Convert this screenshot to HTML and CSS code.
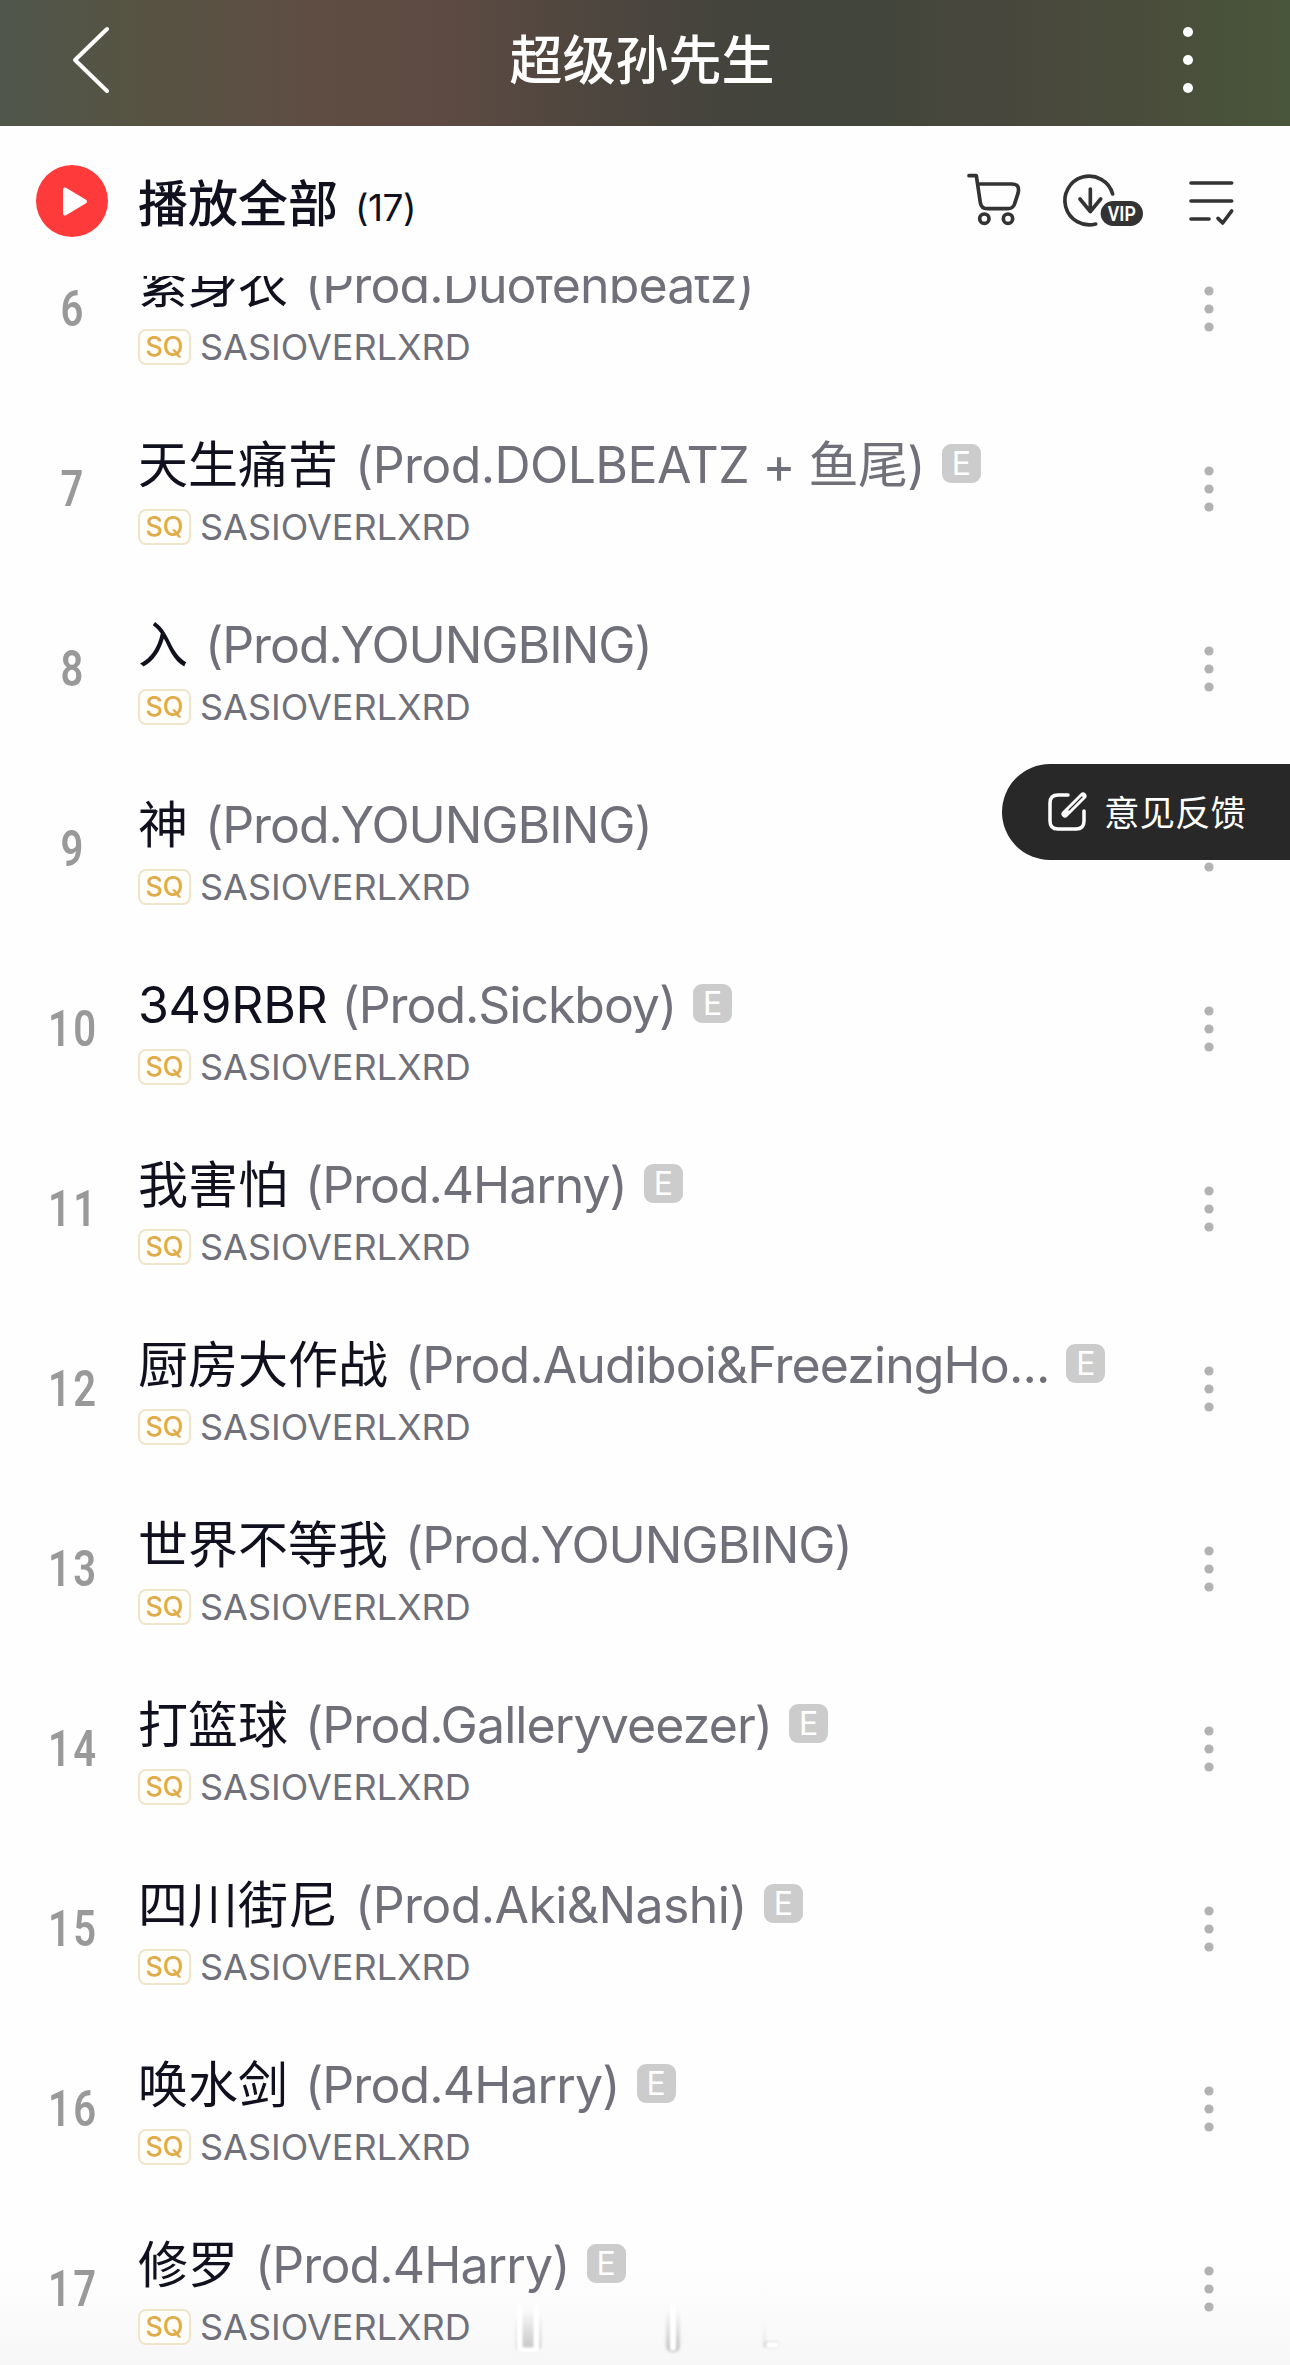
FILE: index.html
```html
<!DOCTYPE html>
<html lang="zh-CN">
<head>
<meta charset="utf-8">
<title>超级孙先生</title>
<link rel="stylesheet" href="styles.css">
</head>
<body>
<svg class="sprite" width="0" height="0">
  <symbol id="dots" viewBox="0 0 10 46"><circle cx="5" cy="5" r="4.6"/><circle cx="5" cy="23" r="4.6"/><circle cx="5" cy="41" r="4.6"/></symbol>
</svg>
<header class="header">
  <svg class="back" width="44" height="74" viewBox="0 0 44 74"><path d="M38 6 6 37 38 68"/></svg>
  <h1 class="album">超级孙先生</h1>
  <svg class="menu" width="12" height="68" viewBox="0 0 12 68"><circle cx="6" cy="6" r="5"/><circle cx="6" cy="34" r="5"/><circle cx="6" cy="62" r="5"/></svg>
</header>
<section class="toolbar">
  <svg class="play" width="72" height="72" viewBox="0 0 72 72"><circle cx="36" cy="36" r="36"/><path d="M29 24.500 49 36.500 29 48.500Z"/></svg>
  <span class="play-all">播放全部</span><span class="count">(17)</span>
  <svg class="tools" width="320" height="100" viewBox="0 0 960 300">
    <path d="M87 77H109L121 158Q124 176 142 176H204Q218 176 223 164L234 130Q241 102 216 102H114"/>
    <circle cx="133" cy="206" r="14"/><circle cx="204" cy="206" r="14"/>
    <path d="M518 132A73 73 0 1 0 467 222M451 117V184M420 147 451 185 482 147"/>
    <rect class="vip-bg" x="482" y="153" width="127" height="75" rx="37.500"/>
    <text class="vip" x="545.500" y="212" text-anchor="middle" textLength="84" lengthAdjust="spacingAndGlyphs">VIP</text>
    <path d="M753 99H875M753 153H875M753 207H807M834 205 848 219 875 183"/>
  </svg>
</section>
<main class="list">
  <article class="row"><span class="num">6</span><div class="info"><div class="title"><b>紧身衣</b><span class="prod">(Prod.Duofenbeatz)</span></div><div class="sub"><i class="sq">SQ</i><span class="artist">SASIOVERLXRD</span></div></div><svg class="more"><use href="#dots"/></svg></article>
  <article class="row"><span class="num">7</span><div class="info"><div class="title"><b>天生痛苦</b><span class="prod loose">(Prod.DOLBEATZ + 鱼尾)</span><i class="e">E</i></div><div class="sub"><i class="sq">SQ</i><span class="artist">SASIOVERLXRD</span></div></div><svg class="more"><use href="#dots"/></svg></article>
  <article class="row"><span class="num">8</span><div class="info"><div class="title"><b>入</b><span class="prod tight">(Prod.YOUNGBING)</span></div><div class="sub"><i class="sq">SQ</i><span class="artist">SASIOVERLXRD</span></div></div><svg class="more"><use href="#dots"/></svg></article>
  <article class="row"><span class="num">9</span><div class="info"><div class="title"><b>神</b><span class="prod tight">(Prod.YOUNGBING)</span></div><div class="sub"><i class="sq">SQ</i><span class="artist">SASIOVERLXRD</span></div></div><svg class="more"><use href="#dots"/></svg></article>
  <article class="row"><span class="num">10</span><div class="info"><div class="title"><b class="latin">349RBR</b><span class="prod tight">(Prod.Sickboy)</span><i class="e">E</i></div><div class="sub"><i class="sq">SQ</i><span class="artist">SASIOVERLXRD</span></div></div><svg class="more"><use href="#dots"/></svg></article>
  <article class="row"><span class="num">11</span><div class="info"><div class="title"><b>我害怕</b><span class="prod tight">(Prod.4Harny)</span><i class="e">E</i></div><div class="sub"><i class="sq">SQ</i><span class="artist">SASIOVERLXRD</span></div></div><svg class="more"><use href="#dots"/></svg></article>
  <article class="row"><span class="num">12</span><div class="info"><div class="title"><b>厨房大作战</b><span class="prod">(Prod.Audiboi&amp;FreezingHo...</span><i class="e">E</i></div><div class="sub"><i class="sq">SQ</i><span class="artist">SASIOVERLXRD</span></div></div><svg class="more"><use href="#dots"/></svg></article>
  <article class="row"><span class="num">13</span><div class="info"><div class="title"><b>世界不等我</b><span class="prod tight">(Prod.YOUNGBING)</span></div><div class="sub"><i class="sq">SQ</i><span class="artist">SASIOVERLXRD</span></div></div><svg class="more"><use href="#dots"/></svg></article>
  <article class="row"><span class="num">14</span><div class="info"><div class="title"><b>打篮球</b><span class="prod">(Prod.Galleryveezer)</span><i class="e">E</i></div><div class="sub"><i class="sq">SQ</i><span class="artist">SASIOVERLXRD</span></div></div><svg class="more"><use href="#dots"/></svg></article>
  <article class="row"><span class="num">15</span><div class="info"><div class="title"><b>四川街尼</b><span class="prod loose">(Prod.Aki&amp;Nashi)</span><i class="e">E</i></div><div class="sub"><i class="sq">SQ</i><span class="artist">SASIOVERLXRD</span></div></div><svg class="more"><use href="#dots"/></svg></article>
  <article class="row"><span class="num">16</span><div class="info"><div class="title"><b>唤水剑</b><span class="prod">(Prod.4Harry)</span><i class="e">E</i></div><div class="sub"><i class="sq">SQ</i><span class="artist">SASIOVERLXRD</span></div></div><svg class="more"><use href="#dots"/></svg></article>
  <article class="row"><span class="num">17</span><div class="info"><div class="title"><b>修罗</b><span class="prod">(Prod.4Harry)</span><i class="e">E</i></div><div class="sub"><i class="sq">SQ</i><span class="artist">SASIOVERLXRD</span></div></div><svg class="more"><use href="#dots"/></svg></article>
</main>
<!-- Faint shapes showing through the bottom edge -->
<svg class="ghost" width="290" height="60" viewBox="0 0 290 60">
  <defs><linearGradient id="fade" x1="0" y1="0" x2="0" y2="60" gradientUnits="userSpaceOnUse"><stop offset=".1" stop-color="#aaa" stop-opacity="0"/><stop offset=".85" stop-color="#aaa" stop-opacity=".75"/></linearGradient></defs>
  <g class="shade"><path d="M16 4V43Q17 48 28 48Q40 48 41 43V4Z"/><path d="M166 4V43Q167 48 173 48Q179 48 180 43V4Z"/><path d="M264 6V43H278V38H265Z"/></g>
  <g class="shine"><path d="M19.500 3V43M36.500 3V43M20 45.500Q28 47.500 37 45.500M173 3V44M269 41H276"/></g>
</svg>
<aside class="feedback">
  <svg width="40" height="40" viewBox="0 0 40 40"><path d="M21 3H11Q3 3 3 11V29Q3 37 11 37H29Q37 37 37 29V19"/><path class="pen" d="M18 22 36 4"/><path class="pen-core" d="M22 18 35 5"/></svg>
  <span>意见反馈</span>
</aside>
</body>
</html>
```
FILE: styles.css
```css
* { box-sizing: border-box; }
body {
  margin: 0;
  height: 2365px;
  overflow: hidden;
  position: relative;
  display: flex;
  flex-direction: column;
  background: linear-gradient(#fefefe 2265px, #f7f7f7 2365px);
  font-family: Inter, "Noto Sans CJK SC", sans-serif;
}
.sprite { position: absolute; }
.header {
  flex: none;
  height: 126px;
  padding: 0 96px 6px 69px;
  display: flex;
  align-items: center;
  justify-content: space-between;
  background: linear-gradient(90deg, #50564c 0, #565443 130px, #5e4d43 300px, #5e4b43 430px, #51473f 560px, #45443d 700px, #41453b 850px, #48473d 1000px, #4a4d3b 1150px, #49563a 1290px);
}
.back { fill: none; stroke: #fff; stroke-width: 4; stroke-linecap: round; stroke-linejoin: round; }
.menu { fill: #fff; }
.album { margin: 2px 11px 0 0; color: #fff; font-size: 53px; line-height: 80px; font-weight: 500; }
.toolbar {
  flex: none;
  height: 150px;
  padding-left: 36px;
  display: flex;
  align-items: center;
  color: #10101f;
}
.play { fill: #fe3a3b; }
.play path { fill: #fff; stroke: #fff; stroke-width: 4; stroke-linejoin: round; }
.play-all { margin: -3px 0 0 30px; font-size: 50px; font-weight: 500; }
.count { margin: 12px 0 0 17px; font-size: 37px; letter-spacing: -0.500px; }
.tools { margin: -2px 30px 0 auto; fill: none; stroke: #333; stroke-width: 11; stroke-linecap: round; stroke-linejoin: round; }
.tools .vip-bg { fill: #333; stroke: none; }
.tools .vip { fill: #fff; stroke: none; font: 600 61px Roboto, sans-serif; }
.list { flex: 1; min-height: 0; overflow: hidden; }
.row { height: 180px; display: flex; align-items: center; }
.row:first-child { margin-top: -57px; }
.num {
  width: 144px;
  padding-left: 3px;
  text-align: center;
  color: #999;
  font: 600 50px/60px Roboto, sans-serif;
  letter-spacing: 3px;
  transform: scaleX(0.8);
}
.info { flex: 1; margin-left: -6px; }
.title { height: 60px; display: flex; align-items: center; white-space: nowrap; line-height: 60px; font-size: 50px; }
.title b { padding-top: 3px; color: #10101f; font-weight: 400; }
.title .latin { letter-spacing: -0.300px; margin-right: -3px; }
.prod { padding-top: 3px; margin-left: 17px; color: #70707a; letter-spacing: -0.900px; }
.prod.tight { letter-spacing: -1.050px; }
.prod.loose { letter-spacing: -0.600px; }
.title i { margin-left: 17px; }
.e {
  width: 39px; height: 39px; border-radius: 9px;
  background: #ccc; color: #fff;
  text-align: center;
  font: normal 400 32px/40px Inter, sans-serif;
}
.sub { display: flex; align-items: center; height: 36px; margin-top: 16px; }
.sq {
  width: 53px; height: 36px; border: 2px solid #f1e5c9; border-radius: 8px;
  background: #fffefa; color: #dfac48;
  text-align: center;
  font: normal 500 27px/32px Inter, sans-serif;
}
.artist { margin-left: 9px; color: #70707a; font-size: 36px; }
.more { width: 10px; height: 46px; margin-right: 76px; fill: #b2b2b2; }
.ghost { position: absolute; left: 500px; top: 2304px; fill: none; }
.ghost .shade { fill: url(#fade); filter: blur(1.500px); }
.ghost .shine { stroke: #fff; stroke-width: 6; stroke-linecap: round; filter: blur(0.800px); }
.feedback {
  position: absolute;
  right: 0; top: 764px;
  width: 288px; height: 96px;
  padding-left: 45px;
  display: flex; align-items: center; gap: 17px;
  border-radius: 48px 0 0 48px;
  background: #282828; color: #fff;
  font-size: 35.500px;
}
.feedback span { margin-top: -3px; }
.feedback svg { fill: none; stroke: #fff; stroke-width: 3.500; stroke-linecap: round; }
.feedback .pen { stroke-width: 7; }
.feedback .pen-core { stroke: #282828; stroke-width: 1.200; }
```
